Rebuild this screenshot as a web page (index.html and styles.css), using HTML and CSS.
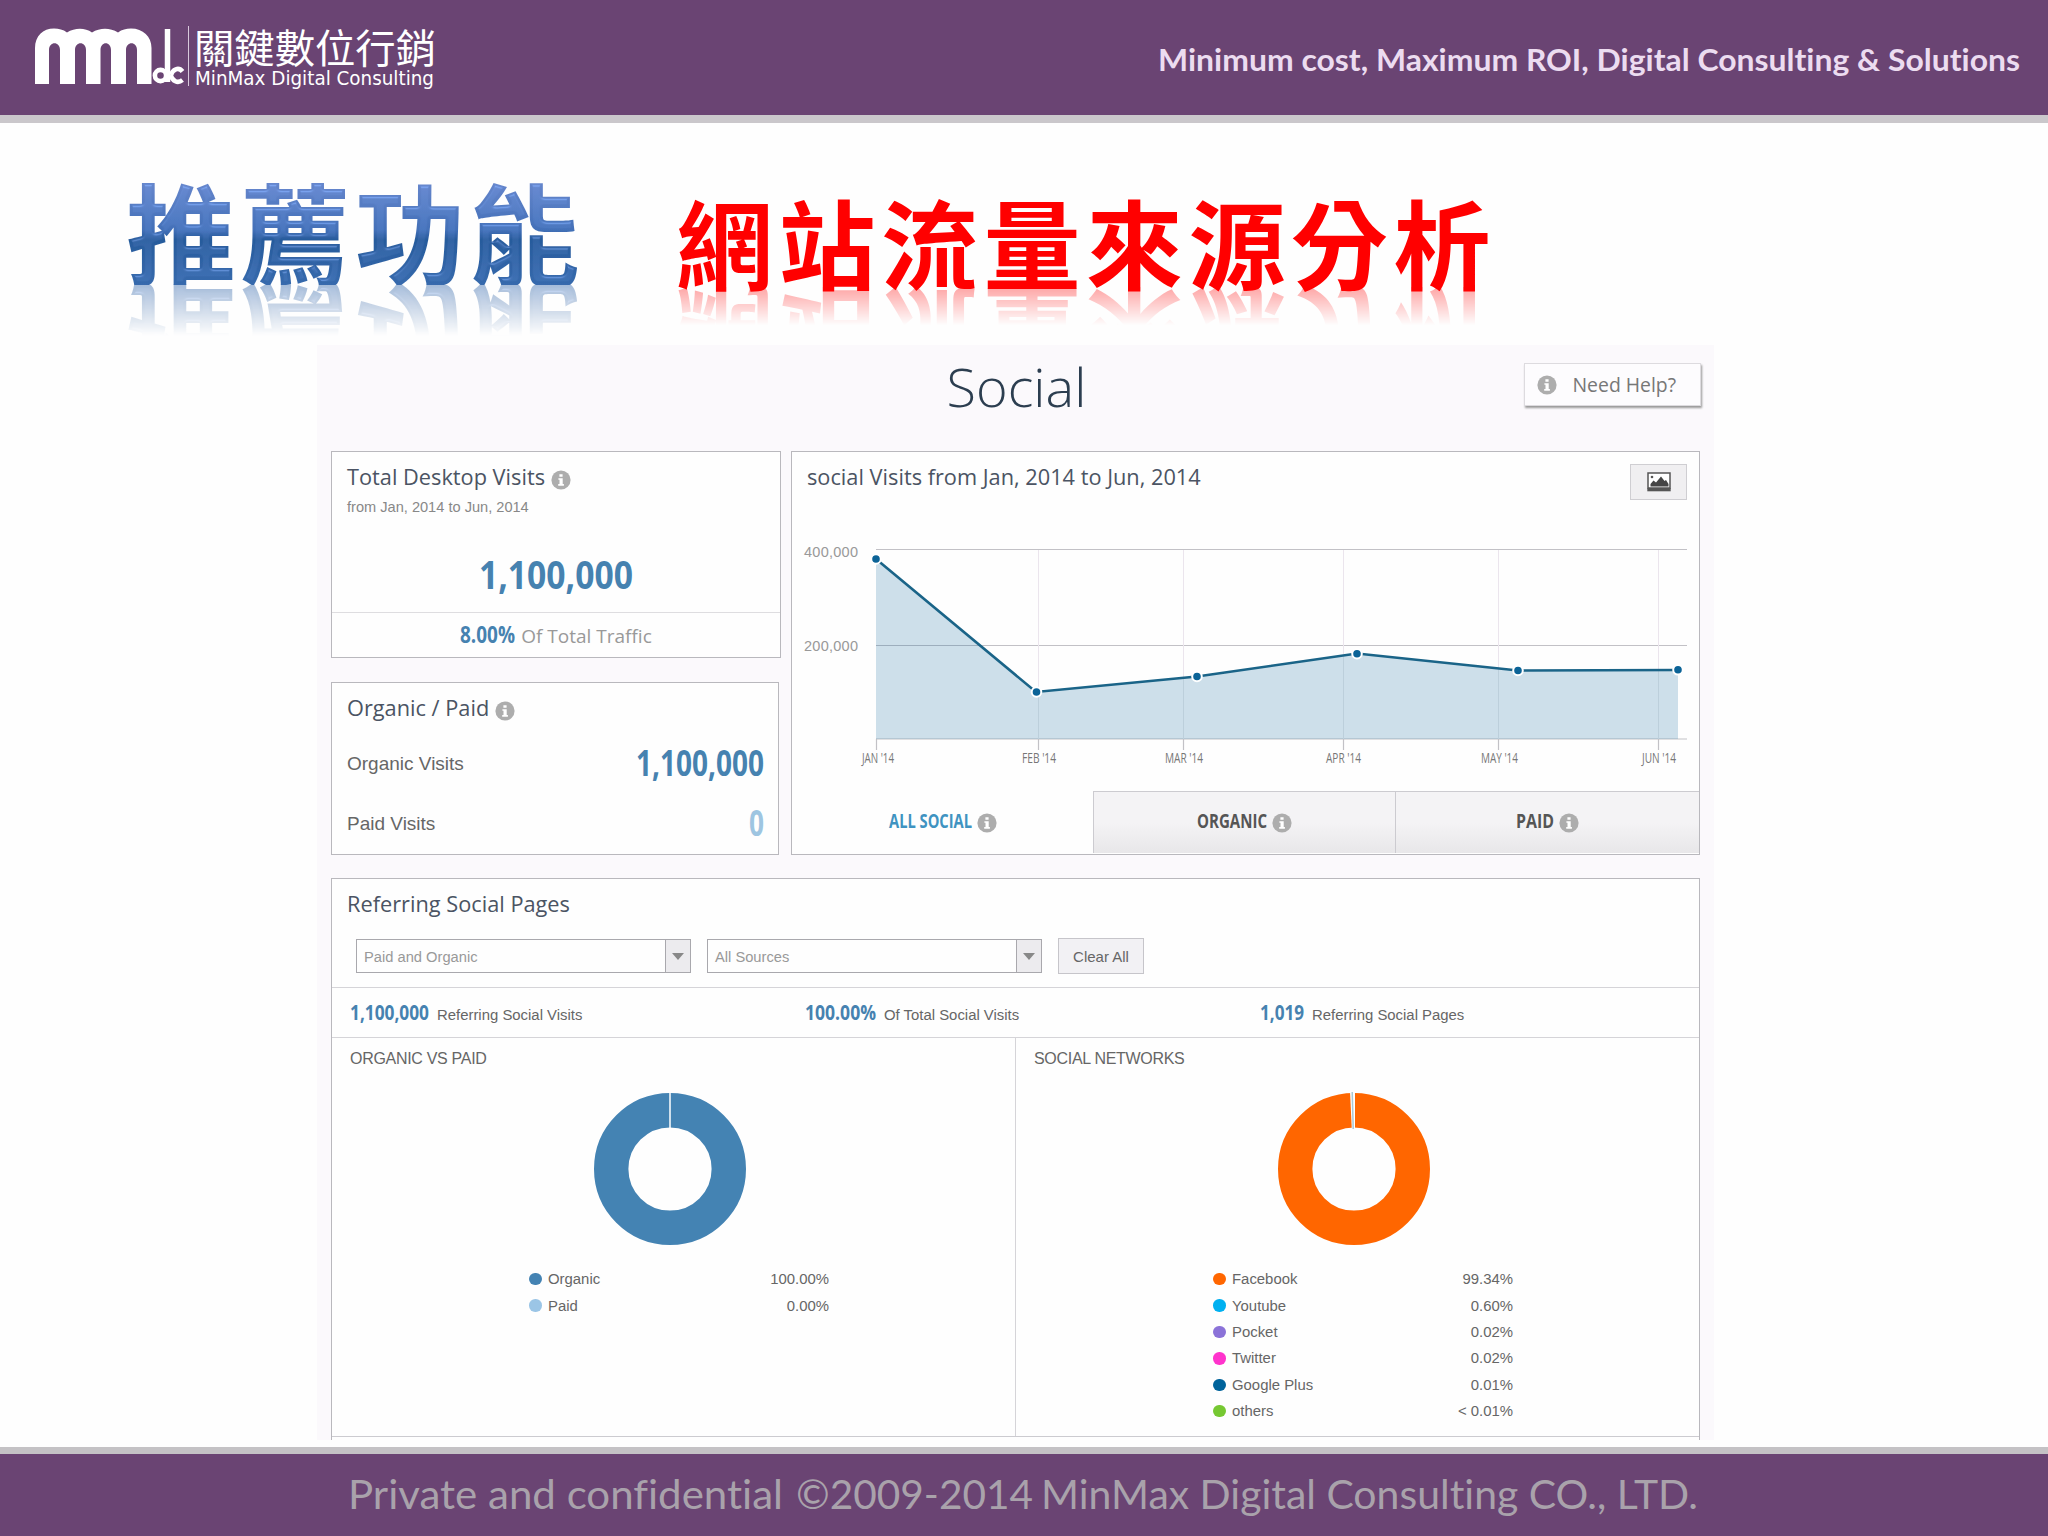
FILE: index.html
```html
<!DOCTYPE html>
<html lang="zh-Hant">
<head>
    <meta charset="UTF-8">
    <meta name="viewport" content="width=device-width, initial-scale=1.0">
    <title>MinMax Digital Consulting</title>
    <link rel="stylesheet" href="styles.css">
</head>
<body>
    <!-- shared icon and filter definitions -->
    <svg class="defs" width="0" height="0">
        <symbol id="info" viewBox="0 0 20 20">
            <circle cx="10" cy="10" r="9.6" fill="#adadad"/>
            <path d="M8.4 4.2h3.2v2.5H8.4zM7.4 8.2h4.3v5.9h1.2v1.6H7.2v-1.6h1.3V9.8H7.4z" fill="#fff"/>
        </symbol>
        <filter id="bevel" x="-5%" y="-5%" width="110%" height="110%">
            <feGaussianBlur in="SourceAlpha" stdDeviation="1.4" result="blur"/>
            <feSpecularLighting in="blur" surfaceScale="4" specularConstant="0.6" specularExponent="16" lighting-color="#8fb8f8" result="spec">
                <feDistantLight azimuth="270" elevation="35"/>
            </feSpecularLighting>
            <feComposite in="spec" in2="SourceAlpha" operator="in" result="lit"/>
            <feComposite in="SourceGraphic" in2="lit" operator="arithmetic" k1="0" k2="1" k3="0.5" k4="0"/>
        </filter>
    </svg>

    <header class="header">
        <svg class="logo" width="420" height="90" viewBox="20 10 420 90">
            <path d="M35 84V48C35 36 43 28.500 54 28.500c5 0 9 1 13 4 8-5 18-5 25 0 8-5 18-5 26 0 4-3 8-4 13-4 12 0 20.500 8 20.500 19.500V84H137V50c0-9-11-9-11 0v34h-15V50c0-9-10.500-9-10.500 0v34H86V50c0-9-11-9-11 0v34H60V50c0-9-11-9-11 0v34z" fill="#fff"/>
            <g fill="none" stroke="#fff">
                <path d="M167.500 29V82" stroke-width="5.500"/>
                <circle cx="160.500" cy="75.500" r="5.600" stroke-width="4.600"/>
                <path d="M182.500 71.500c-4-5-10-2-11.500 3.500M182.500 80c-5 4-10 1-12-5" stroke-width="4.600"/>
            </g>
            <path d="M188.500 26V86" stroke="#d8c9dc" stroke-width="1"/>
            <text class="logo-zh" x="194" y="63" textLength="242" lengthAdjust="spacingAndGlyphs">關鍵數位行銷</text>
            <text class="logo-en" x="195" y="85" textLength="239" lengthAdjust="spacingAndGlyphs">MinMax Digital Consulting</text>
        </svg>
        <svg class="slogan" width="864" height="50">
            <text x="0" y="41" textLength="862" lengthAdjust="spacingAndGlyphs">Minimum cost, Maximum ROI, Digital Consulting &amp; Solutions</text>
        </svg>
    </header>

    <main>
        <div class="titles">
            <h1 class="title-blue"><span>推薦功能</span></h1>
            <h1 class="title-red">網站流量來源分析</h1>
        </div>

        <section class="panel">
            <div class="panel-head">
                <h2>Social</h2>
                <button class="help"><svg class="info"><use href="#info"/></svg>Need Help?</button>
            </div>

            <div class="top">
                <div class="left">
                    <div class="card total">
                        <h3>Total Desktop Visits <svg class="info"><use href="#info"/></svg></h3>
                        <p class="period">from Jan, 2014 to Jun, 2014</p>
                        <svg class="cond" width="154" height="56"><text x="0" y="47" font-size="40" textLength="154" lengthAdjust="spacingAndGlyphs">1,100,000</text></svg>
                        <div class="share">
                            <svg class="cond" width="55" height="44"><text x="0" y="30" font-size="23" textLength="55" lengthAdjust="spacingAndGlyphs">8.00%</text></svg>
                            <span>Of Total Traffic</span>
                        </div>
                    </div>
                    <div class="card split">
                        <h3>Organic / Paid <svg class="info"><use href="#info"/></svg></h3>
                        <div class="split-row">
                            <span>Organic Visits</span>
                            <svg class="cond" width="128" height="60"><text x="0" y="48" font-size="35" textLength="128" lengthAdjust="spacingAndGlyphs">1,100,000</text></svg>
                        </div>
                        <div class="split-row">
                            <span>Paid Visits</span>
                            <svg class="cond light" width="15" height="60"><text x="0" y="48" font-size="35" textLength="15" lengthAdjust="spacingAndGlyphs">0</text></svg>
                        </div>
                    </div>
                </div>

                <div class="card graph">
                    <div class="graph-head">
                        <h3>social Visits from Jan, 2014 to Jun, 2014</h3>
                        <button class="export">
                            <svg width="24" height="20" viewBox="0 0 24 20">
                                <path d="M1 1h22v15H1z" fill="#fff" stroke="#555" stroke-width="1.500"/>
                                <path d="M.3 16h23.400v3.300H.3z" fill="#555"/>
                                <path d="M3.500 14.500V12l3-3.500 2.500 2 5-6 3.500 4.500 1.500-1 2.500 4v2.500z" fill="#444"/>
                                <circle cx="5" cy="5" r="1.300" fill="#555"/>
                            </svg>
                        </button>
                    </div>
                    <svg class="chart" width="906" height="286" viewBox="792 505 906 286">
                        <g stroke="#c2c1c6" stroke-width="1.200">
                            <path d="M876 549.500H1687M876 645.500H1687M876 739H1687"/>
                            <path d="M876.500 739V750M1038.500 739V750M1183.500 739V750M1343.500 739V750M1498.500 739V750M1658.500 739V750"/>
                        </g>
                        <path d="M1038.500 550V739M1183.500 550V739M1343.500 550V739M1498.500 550V739M1658.500 550V739" stroke="#ebe5ed" stroke-width="1"/>
                        <path d="M876 559L1036 692 1197 676.500 1357 653.500 1518 670.500 1678 670V739H876z" fill="#0a6599" fill-opacity=".2"/>
                        <path d="M1038.500 692V739M1183.500 678V739M1343.500 655V739M1498.500 669V739M1658.500 670V739" stroke="#bccfdb" stroke-width="1"/>
                        <path d="M876 559L1036 692 1197 676.500 1357 653.500 1518 670.500 1678 670" fill="none" stroke="#1a6488" stroke-width="2.600"/>
                        <g fill="#0b6397" stroke="#fff" stroke-width="2">
                            <circle cx="876" cy="559" r="4.800"/>
                            <circle cx="1036.500" cy="692" r="4.800"/>
                            <circle cx="1197" cy="676.500" r="4.800"/>
                            <circle cx="1357" cy="653.700" r="4.800"/>
                            <circle cx="1518" cy="670.500" r="4.800"/>
                            <circle cx="1678" cy="669.800" r="4.800"/>
                        </g>
                        <g class="y-label">
                            <text x="804" y="557" textLength="54">400,000</text>
                            <text x="804" y="650.500" textLength="54">200,000</text>
                        </g>
                        <g class="x-label">
                            <text x="862" y="763" textLength="32" lengthAdjust="spacingAndGlyphs">JAN '14</text>
                            <text x="1022" y="763" textLength="34" lengthAdjust="spacingAndGlyphs">FEB '14</text>
                            <text x="1165" y="763" textLength="38" lengthAdjust="spacingAndGlyphs">MAR '14</text>
                            <text x="1326" y="763" textLength="35" lengthAdjust="spacingAndGlyphs">APR '14</text>
                            <text x="1481" y="763" textLength="37" lengthAdjust="spacingAndGlyphs">MAY '14</text>
                            <text x="1642" y="763" textLength="34" lengthAdjust="spacingAndGlyphs">JUN '14</text>
                        </g>
                    </svg>
                    <div class="tabs">
                        <div class="tab active">
                            <svg class="cond" width="83" height="30"><text x="0" y="20" font-size="19" textLength="83" lengthAdjust="spacingAndGlyphs">ALL SOCIAL</text></svg>
                            <svg class="info"><use href="#info"/></svg>
                        </div>
                        <div class="tab">
                            <svg class="cond" width="70" height="30"><text x="0" y="20" font-size="19" textLength="70" lengthAdjust="spacingAndGlyphs">ORGANIC</text></svg>
                            <svg class="info"><use href="#info"/></svg>
                        </div>
                        <div class="tab">
                            <svg class="cond" width="38" height="30"><text x="0" y="20" font-size="19" textLength="38" lengthAdjust="spacingAndGlyphs">PAID</text></svg>
                            <svg class="info"><use href="#info"/></svg>
                        </div>
                    </div>
                </div>
            </div>

            <div class="card pages">
                <h3>Referring Social Pages</h3>
                <div class="filters">
                    <div class="select"><span>Paid and Organic</span><i></i></div>
                    <div class="select"><span>All Sources</span><i></i></div>
                    <button class="clear">Clear All</button>
                </div>
                <div class="stats">
                    <div>
                        <svg class="cond" width="79" height="48"><text x="0" y="32" font-size="22" textLength="79" lengthAdjust="spacingAndGlyphs">1,100,000</text></svg>
                        <span>Referring Social Visits</span>
                    </div>
                    <div>
                        <svg class="cond" width="71" height="48"><text x="0" y="32" font-size="22" textLength="71" lengthAdjust="spacingAndGlyphs">100.00%</text></svg>
                        <span>Of Total Social Visits</span>
                    </div>
                    <div>
                        <svg class="cond" width="44" height="48"><text x="0" y="32" font-size="22" textLength="44" lengthAdjust="spacingAndGlyphs">1,019</text></svg>
                        <span>Referring Social Pages</span>
                    </div>
                </div>
                <div class="donuts">
                    <div class="donut">
                        <h4>ORGANIC VS PAID</h4>
                        <svg width="154" height="154" viewBox="-77 -77 154 154">
                            <circle r="58.800" fill="none" stroke="#4483b3" stroke-width="34.400"/>
                            <path d="M0-77V-40" stroke="#fff" stroke-width="1.500"/>
                        </svg>
                        <ul>
                            <li class="organic"><span>Organic</span><b>100.00%</b></li>
                            <li class="paid"><span>Paid</span><b>0.00%</b></li>
                        </ul>
                    </div>
                    <div class="donut">
                        <h4>SOCIAL NETWORKS</h4>
                        <svg width="154" height="154" viewBox="-77 -77 154 154">
                            <circle r="58.800" fill="none" stroke="#ff6600" stroke-width="34.400"/>
                            <path d="M-4-78L-2.200-40H1V-78z" fill="#fff"/>
                            <path d="M-1.800-77L-.8-40" stroke="#a9c9d4" stroke-width="1.500"/>
                        </svg>
                        <ul>
                            <li class="facebook"><span>Facebook</span><b>99.34%</b></li>
                            <li class="youtube"><span>Youtube</span><b>0.60%</b></li>
                            <li class="pocket"><span>Pocket</span><b>0.02%</b></li>
                            <li class="twitter"><span>Twitter</span><b>0.02%</b></li>
                            <li class="google"><span>Google Plus</span><b>0.01%</b></li>
                            <li class="others"><span>others</span><b>&lt; 0.01%</b></li>
                        </ul>
                    </div>
                </div>
            </div>
        </section>
    </main>

    <footer class="footer">
        <svg width="1352" height="82">
            <text x="0" y="55" textLength="435" lengthAdjust="spacingAndGlyphs">Private and confidential</text>
            <text x="448" y="55" textLength="237" lengthAdjust="spacingAndGlyphs">©2009-2014</text>
            <text x="693" y="55" textLength="657" lengthAdjust="spacingAndGlyphs">MinMax Digital Consulting CO., LTD.</text>
        </svg>
    </footer>
</body>
</html>
```

FILE: styles.css
```css
/* styles.css */
* {
    box-sizing: border-box;
}

body {
    margin: 0;
    width: 2048px;
    height: 1536px;
    overflow: hidden;
    display: flex;
    flex-direction: column;
    background: #fefefe;
    font-family: "Liberation Sans", Arial, sans-serif;
    color: #666;
}

svg {
    display: block;
    flex-shrink: 0;
    overflow: visible;
}

.defs {
    position: absolute;
}

h1, h2, h3, h4, p, ul {
    margin: 0;
    padding: 0;
    font-weight: normal;
}

button {
    font-family: inherit;
    padding: 0;
    color: #666;
}

/* header */
.header {
    height: 123px;
    background: #6a4473;
    border-bottom: 8px solid #cac7cb;
    display: flex;
    justify-content: space-between;
    align-items: flex-start;
    padding: 10px 26px 0 20px;
}

.logo text {
    fill: #fff;
}

.logo-zh {
    font: 400 40px "Noto Sans CJK TC", sans-serif;
}

.logo-en {
    font: 20px "DejaVu Sans", sans-serif;
}

.slogan {
    margin-top: 20px;
}

.slogan text {
    font: bold 30px Lato, sans-serif;
    font-variant-ligatures: none;
    fill: #ecdcf0;
}

/* big titles */
.titles {
    height: 222px;
    display: flex;
    padding-left: 126px;
}

.title-blue, .title-red {
    font-family: "Noto Sans CJK TC", sans-serif;
    font-weight: bold;
    white-space: nowrap;
}

.title-blue {
    width: 550px;
    height: 162px;
    font-size: 110px;
    line-height: 212px;
    letter-spacing: 4.500px;
    -webkit-box-reflect: below -1px linear-gradient(transparent 68%, rgba(0, 0, 0, 0.45));
}

.title-blue span {
    display: block;
    height: 162px;
    background: linear-gradient(#6485cb 38%, #4370b8 66%, #275b9c 72%, #376aad 100%);
    -webkit-background-clip: text;
    background-clip: text;
    color: transparent;
    filter: url(#bevel);
}

.title-red {
    height: 167px;
    font-size: 97px;
    line-height: 234px;
    letter-spacing: 5.500px;
    color: #ff0000;
    -webkit-box-reflect: below -3px linear-gradient(transparent 77%, rgba(0, 0, 0, 0.35));
}

/* grey panel with the cards */
.panel {
    width: 1397px;
    height: 1095px;
    margin-left: 317px;
    padding: 0 14px;
    background: #fbf9fc;
}

.panel-head {
    height: 106px;
    display: grid;
    grid-template-columns: 1fr auto 1fr;
}

.panel-head h2 {
    grid-column: 2;
    padding-left: 2px;
    font: 300 54px/83px "Open Sans", sans-serif;
    color: #2c3e50;
}

.help {
    justify-self: end;
    width: 177px;
    height: 43px;
    margin: 18px -1px 0 0;
    padding-left: 12px;
    display: flex;
    align-items: center;
    gap: 15.500px;
    background: #fdfcfe;
    border: 1px solid #dddbdf;
    box-shadow: 1px 2px 2px #999;
    font: 19.400px "Open Sans", sans-serif;
    color: #777;
}

.info {
    width: 20px;
    height: 20px;
}

.card {
    background: #fefefe;
    border: 1.500px solid #b9b8bd;
}

.card h3 {
    display: flex;
    align-items: center;
    height: 40px;
    padding-left: 15px;
    font: 21.750px/40px "Open Sans", sans-serif;
    color: #4b5463;
}

.card h3 .info {
    margin: 6px 0 0 6px;
}

.cond text {
    font-family: "Open Sans", sans-serif;
    font-weight: bold;
    fill: #4682b0;
}

.cond.light text {
    fill: #9ec5e1;
}

.top {
    display: flex;
    gap: 10px;
    height: 427px;
}

.left {
    width: 450px;
}

.total {
    height: 207px;
    padding-top: 5px;
    margin-bottom: 24px;
}

.period {
    padding-left: 15px;
    font-size: 14.600px;
    line-height: 20px;
    color: #888;
}

.total > .cond {
    margin: 25px auto 14px;
}

.share {
    display: flex;
    justify-content: center;
    gap: 6px;
    border-top: 1.500px solid #dedde0;
    font: 19px/46px "Open Sans", sans-serif;
    color: #999;
}

.split {
    width: 448px;
    height: 173px;
    padding-top: 5px;
}

.split-row {
    display: flex;
    justify-content: space-between;
    height: 60px;
    padding: 0 14px 0 15px;
    font-size: 19px;
    line-height: 72px;
}

/* line chart */
.graph {
    width: 909px;
    height: 404px;
}

.graph-head {
    display: flex;
    justify-content: space-between;
    height: 53px;
    padding: 5px 12px 0 0;
}

.export {
    width: 57px;
    height: 36px;
    margin-top: 7px;
    display: flex;
    justify-content: center;
    align-items: center;
    background: #f0eff1;
    border: 1.500px solid #cfced2;
}

.y-label text {
    font-size: 14.500px;
    fill: #999;
}

.x-label text {
    font: 14.500px "Open Sans", sans-serif;
    fill: #777;
}

.tabs {
    display: grid;
    grid-template-columns: 301px 302px 1fr;
    height: 62px;
}

.tab {
    display: flex;
    justify-content: center;
    align-items: center;
    gap: 6px;
    background: linear-gradient(#f4f3f5 50%, #e8e7e9);
    border-top: 1px solid #cccbd0;
    border-left: 1.500px solid #cccbd0;
}

.tab .info {
    margin: 0 1px 0 -1px;
}

.tab text {
    fill: #555;
}

.tab.active {
    background: none;
    border-color: transparent;
}

.tab.active text {
    fill: #3f93c1;
}

/* referring pages */
.pages {
    height: 562px;
    border-bottom: none;
    padding-top: 5px;
}

.filters {
    display: flex;
    align-items: center;
    gap: 16px;
    height: 62px;
    padding-left: 24px;
    margin-top: 1px;
}

.select {
    display: flex;
    width: 335px;
    height: 34px;
    border: 1.500px solid #a9a8ad;
    font-size: 14.700px;
    line-height: 34px;
    color: #999;
}

.select span {
    flex: 1;
    padding-left: 7px;
}

.select i {
    width: 25px;
    background: #ecebee;
    border-left: 1.500px solid #a9a8ad;
    display: grid;
    place-items: center;
}

.select i::after {
    content: "";
    border: 6px solid transparent;
    border-top: 7px solid #888;
    border-bottom: none;
}

.clear {
    width: 86px;
    height: 36px;
    background: #f2f1f4;
    border: 1.500px solid #c6c5ca;
    font-size: 15px;
}

.stats {
    display: grid;
    grid-template-columns: 455px 455px 1fr;
    height: 51px;
    padding-left: 18px;
    border-top: 1.500px solid #d5d4d8;
    border-bottom: 1.500px solid #d5d4d8;
    font-size: 14.900px;
    line-height: 54px;
}

.stats div {
    display: flex;
    gap: 8px;
}

.donuts {
    display: grid;
    grid-template-columns: 683px 1fr;
    height: 399px;
    border-bottom: 1.500px solid #cccbd0;
}

.donut + .donut {
    border-left: 1.500px solid #d5d4d8;
}

.donut h4 {
    padding-left: 18px;
    font-size: 16px;
    line-height: 42px;
    letter-spacing: -0.300px;
}

.donut > svg {
    margin: 12px 0 20px 261px;
}

.donut ul {
    width: 300px;
    margin-left: 197px;
    list-style: none;
}

.donut li {
    display: flex;
    align-items: center;
    height: 26.400px;
    font-size: 14.900px;
}

.donut li::before {
    content: "";
    width: 12.500px;
    height: 12.500px;
    margin-right: 6.500px;
    border-radius: 50%;
    background: var(--dot);
}

.donut li span {
    flex: 1;
}

.donut li b {
    font-weight: normal;
}

.organic { --dot: #4483b3; }
.paid { --dot: #9bc5e6; }
.facebook { --dot: #ff6600; }
.youtube { --dot: #00b0f0; }
.pocket { --dot: #8b72d8; }
.twitter { --dot: #ff33cc; }
.google { --dot: #00639b; }
.others { --dot: #76c832; }

/* footer */
.footer {
    margin-top: auto;
    height: 89px;
    background: #6a4473;
    border-top: 7px solid #c4c2c5;
    padding-left: 348px;
}

.footer text {
    font: 41px Lato, sans-serif;
    font-variant-ligatures: none;
    fill: #a9a2ab;
}
```
